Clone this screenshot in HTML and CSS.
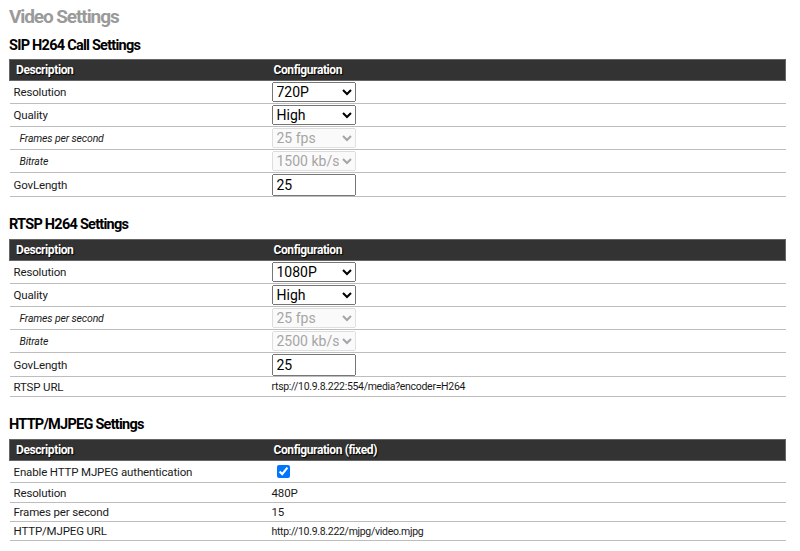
FILE: index.html
```html
<!DOCTYPE html>
<html>
<head>
<meta charset="utf-8">
<link rel="stylesheet" href="styles.css">
</head>
<body>
<h1 class="page-title">Video Settings</h1>

<h2 class="section-title first">SIP H264 Call Settings</h2>
<table class="settings">
  <colgroup><col class="c-desc"><col class="c-conf"></colgroup>
  <thead><tr><th>Description</th><th>Configuration</th></tr></thead>
  <tbody>
    <tr class="ctl"><td>Resolution</td><td><select class="sel"><option>720P</option></select></td></tr>
    <tr class="ctl"><td>Quality</td><td><select class="sel"><option>High</option></select></td></tr>
    <tr class="ctl sub"><td>Frames per second</td><td><select class="sel" disabled><option>25 fps</option></select></td></tr>
    <tr class="ctl sub"><td>Bitrate</td><td><select class="sel" disabled><option>1500 kb/s</option></select></td></tr>
    <tr class="inp"><td>GovLength</td><td><input class="txt" type="text" value="25"></td></tr>
  </tbody>
</table>

<h2 class="section-title">RTSP H264 Settings</h2>
<table class="settings">
  <colgroup><col class="c-desc"><col class="c-conf"></colgroup>
  <thead><tr><th>Description</th><th>Configuration</th></tr></thead>
  <tbody>
    <tr class="ctl"><td>Resolution</td><td><select class="sel"><option>1080P</option></select></td></tr>
    <tr class="ctl"><td>Quality</td><td><select class="sel"><option>High</option></select></td></tr>
    <tr class="ctl sub"><td>Frames per second</td><td><select class="sel" disabled><option>25 fps</option></select></td></tr>
    <tr class="ctl sub"><td>Bitrate</td><td><select class="sel" disabled><option>2500 kb/s</option></select></td></tr>
    <tr class="inp"><td>GovLength</td><td><input class="txt" type="text" value="25"></td></tr>
    <tr class="plain url-row"><td>RTSP URL</td><td class="url">rtsp://10.9.8.222:554/media?encoder=H264</td></tr>
  </tbody>
</table>

<h2 class="section-title">HTTP/MJPEG Settings</h2>
<table class="settings">
  <colgroup><col class="c-desc"><col class="c-conf"></colgroup>
  <thead><tr><th>Description</th><th>Configuration (fixed)</th></tr></thead>
  <tbody>
    <tr class="chk"><td>Enable HTTP MJPEG authentication</td><td><input class="box" type="checkbox" checked></td></tr>
    <tr class="plain tall"><td>Resolution</td><td>480P</td></tr>
    <tr class="plain"><td>Frames per second</td><td>15</td></tr>
    <tr class="plain"><td>HTTP/MJPEG URL</td><td class="url">http://10.9.8.222/mjpg/video.mjpg</td></tr>
  </tbody>
</table>
</body>
</html>
```
FILE: styles.css
```css
html, body {
  margin: 0;
  background: #fff;
}
body {
  padding: 0 14px 0 9px;
  font-family: Roboto, "Liberation Sans", sans-serif;
  color: #111;
}
.page-title {
  margin: 6px 0 0;
  font-size: 19px;
  line-height: 22px;
  font-weight: 700;
  color: #9a9a9a;
  letter-spacing: -1.1px;
}
.section-title {
  margin: 19px 0 5px;
  font-size: 14.5px;
  line-height: 18px;
  font-weight: 700;
  color: #000;
  letter-spacing: -0.75px;
}
.section-title.first {
  margin-top: 9px;
  margin-bottom: 4px;
}
.settings {
  width: 100%;
  border-collapse: collapse;
  table-layout: fixed;
}
.c-desc { width: 258px; }
.settings th {
  background: #333;
  color: #fff;
  text-align: left;
  font-size: 12px;
  font-weight: 700;
  height: 20px;
  padding: 0 6px;
  border-top: 1px solid #666;
  border-bottom: 1px solid #666;
  text-shadow: 1px 1px 1px #000;
  letter-spacing: -0.4px;
}
.settings th:first-child { border-left: 1px solid #666; }
.settings th:last-child { border-right: 1px solid #666; }
.settings td {
  font-size: 11.5px;
  padding: 0 4px;
  border-bottom: 1px solid #bdbdbd;
  color: #1a1a1a;
  letter-spacing: -0.15px;
}
.settings tr.ctl td { height: 22px; }
.settings tr.inp td { height: 23px; }
.settings tr.plain td { height: 18px; }
.settings tr.plain.tall td { height: 19px; }
.settings tr.url-row td { height: 19px; }
.settings tr.chk td { height: 21px; }
.settings tr.sub td:first-child {
  font-style: italic;
  font-size: 10.5px;
  padding-left: 10px;
}
.settings td.url {
  font-size: 10.5px;
  letter-spacing: -0.3px;
}
.sel {
  width: 84px;
  height: 20px;
  font-family: Roboto, "Liberation Sans", sans-serif;
  font-size: 14px;
  margin: 0;
  vertical-align: middle;
  display: block;
}
.txt {
  width: 84px;
  height: 22px;
  box-sizing: border-box;
  font-family: Roboto, "Liberation Sans", sans-serif;
  font-size: 14px;
  margin: 0;
  padding: 1px 3px;
  display: block;
}
.box {
  margin: 0 0 0 5px;
  width: 13px;
  height: 13px;
  display: block;
}
```
